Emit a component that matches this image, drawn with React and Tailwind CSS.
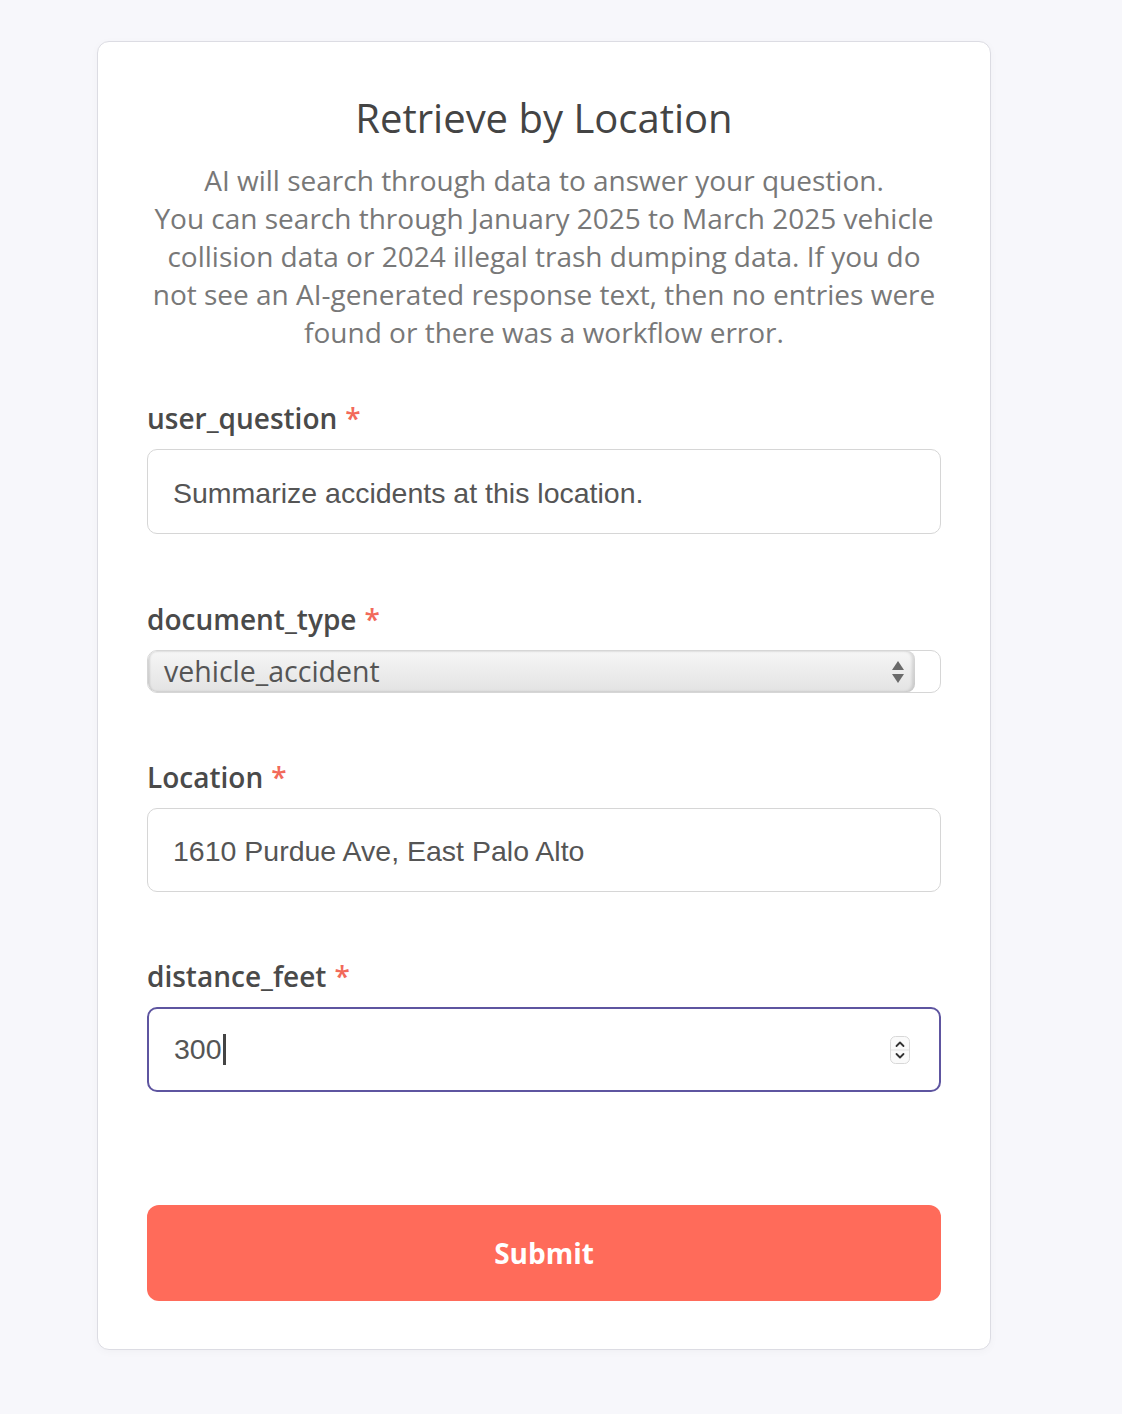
import React from "react";

const Label = ({ children }) => (
  <div className="flex items-center text-[28px] leading-[38px] font-semibold text-[#4a4a4a]">
    <span>{children}</span>
    <span className="ml-[8px] text-[#f26a5a]">*</span>
  </div>
);

const sans = { fontFamily: '"Liberation Sans", Arial, sans-serif' };

export default function App() {
  return (
    <div className="min-h-[1414px] w-full bg-[#f7f7fb] pt-[41px]" style={{ fontFamily: '"Open Sans", sans-serif' }}>
      <div className="ml-[97px] w-[894px] rounded-[12px] border border-[#dcdce3] bg-white px-[49px] pt-[51px] pb-[48px] shadow-[0_2px_8px_rgba(0,0,0,0.03)]">
        <h1 className="text-center text-[40px] leading-[50px] font-normal text-[#444]">Retrieve by Location</h1>
        <p className="mt-[18px] text-center text-[28px] leading-[38px] text-[#787878]">
          AI will search through data to answer your question.
          <br />
          You can search through January 2025 to March 2025 vehicle collision data or 2024 illegal trash dumping data. If you do not see an AI-generated response text, then no entries were found or there was a workflow error.
        </p>

        <div className="mt-[48px]">
          <Label>user_question</Label>
          <div className="mt-[12px] flex h-[85px] items-center rounded-[10px] border-[1.5px] border-[#d6d6d6] px-[25px] pt-[3px] text-[28.5px] text-[#555]" style={sans}>
            Summarize accidents at this location.
          </div>
        </div>

        <div className="mt-[66px]">
          <Label>document_type</Label>
          <div className="mt-[12px] flex h-[43px] overflow-hidden rounded-[10px] border-[1.5px] border-[#d6d6d6] bg-white">
            <div className="flex flex-1 items-center justify-between rounded-[8px] bg-gradient-to-b from-[#f6f6f6] to-[#e3e3e3] pl-[16px] pr-[10px] shadow-[inset_2px_0_2px_rgba(0,0,0,0.12),inset_-3px_0_3px_rgba(0,0,0,0.12)]">
              <span className="text-[28.5px] leading-none text-[#555]">vehicle_accident</span>
              <svg width="14" height="28" viewBox="0 0 14 28">
                <path d="M7 3 L13 12 L1 12 Z" fill="#6a6a6a" />
                <path d="M1 16 L13 16 L7 25 Z" fill="#6a6a6a" />
              </svg>
            </div>
            <div className="w-[25px]" />
          </div>
        </div>

        <div className="mt-[65px]">
          <Label>Location</Label>
          <div className="mt-[12px] flex h-[84px] items-center rounded-[10px] border-[1.5px] border-[#d6d6d6] px-[25px] pt-[3px] text-[28.5px] text-[#555]" style={sans}>
            1610 Purdue Ave, East Palo Alto
          </div>
        </div>

        <div className="mt-[65px]">
          <Label>distance_feet</Label>
          <div className="mt-[12px] flex h-[85px] items-center justify-between rounded-[10px] border-2 border-[#5e55a0] pl-[25px] pr-[29px] text-[28.5px] text-[#555]" style={sans}>
            <span className="flex items-center">
              300
              <span className="ml-[1px] inline-block h-[31px] w-[3px] bg-[#444]" />
            </span>
            <svg width="20" height="28" viewBox="0 0 20 28">
              <rect x="0.5" y="0.5" width="19" height="27" rx="5" fill="#fafafa" stroke="#d8d8d8" />
              <line x1="1" y1="14" x2="19" y2="14" stroke="#e2e2e2" />
              <path d="M6.5 10 L10 6.5 L13.5 10" fill="none" stroke="#333" strokeWidth="1.8" strokeLinecap="round" strokeLinejoin="round" />
              <path d="M6.5 18 L10 21.5 L13.5 18" fill="none" stroke="#333" strokeWidth="1.8" strokeLinecap="round" strokeLinejoin="round" />
            </svg>
          </div>
        </div>

        <button className="mt-[113px] flex h-[96px] w-full items-center justify-center rounded-[12px] bg-[#ff6b5a] text-[28px] font-bold text-white">
          Submit
        </button>
      </div>
    </div>
  );
}
